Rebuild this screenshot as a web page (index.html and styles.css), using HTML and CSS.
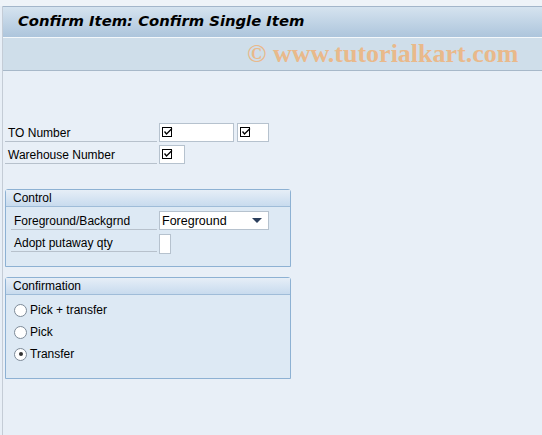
FILE: index.html
```html
<!DOCTYPE html>
<html>
<head>
    <title>Confirm Item: Confirm Single Item</title>
    <link rel="stylesheet" href="styles.css">
</head>
<body>

    <div class="topgap"></div>

    <div class="screen">
        <div class="titlebar">
            <h1>Confirm Item: Confirm Single Item</h1>
        </div>
        <div class="toolbar">
            <span class="watermark">&copy; www.tutorialkart.com</span>
        </div>

        <div class="content">
            <div class="form-row">
                <span class="label">TO Number</span>
                <span class="field w75"><svg class="chk" width="11" height="10" viewBox="0 0 11 10"><rect x="0.5" y="0.5" width="9" height="9" fill="none" stroke="#000"/><path d="M2.5 4.5 L4.5 7 L10 1.5" fill="none" stroke="#000" stroke-width="1.3"/></svg></span>
                <span class="field w32"><svg class="chk" width="11" height="10" viewBox="0 0 11 10"><rect x="0.5" y="0.5" width="9" height="9" fill="none" stroke="#000"/><path d="M2.5 4.5 L4.5 7 L10 1.5" fill="none" stroke="#000" stroke-width="1.3"/></svg></span>
            </div>
            <div class="form-row">
                <span class="label">Warehouse Number</span>
                <span class="field w26"><svg class="chk" width="11" height="10" viewBox="0 0 11 10"><rect x="0.5" y="0.5" width="9" height="9" fill="none" stroke="#000"/><path d="M2.5 4.5 L4.5 7 L10 1.5" fill="none" stroke="#000" stroke-width="1.3"/></svg></span>
            </div>

            <div class="group group-control">
                <div class="group-head">Control</div>
                <div class="group-body">
                    <div class="form-row">
                        <span class="label">Foreground/Backgrnd</span>
                        <span class="field select">Foreground<span class="arrow"></span></span>
                    </div>
                    <div class="form-row">
                        <span class="label">Adopt putaway qty</span>
                        <span class="field w12"></span>
                    </div>
                </div>
            </div>

            <div class="group group-confirm">
                <div class="group-head">Confirmation</div>
                <div class="group-body">
                    <div class="radio-row"><span class="radio"></span>Pick + transfer</div>
                    <div class="radio-row"><span class="radio"></span>Pick</div>
                    <div class="radio-row"><span class="radio on"></span>Transfer</div>
                </div>
            </div>
        </div>
    </div>

</body>
</html>
```

FILE: styles.css
```css
body {
    margin: 0;
    background: #e8eff7;
    font-family: "Liberation Sans", Arial, sans-serif;
    font-size: 12px;
    color: #000;
}
.topgap {
    height: 6px;
    background: #eef3f8;
}
.screen {
    margin-left: 2px;
    border-left: 1px solid #c4ccd6;
    height: 429px;
}
.titlebar {
    height: 30px;
    border-top: 1px solid #a3b6ca;
    border-bottom: 1px solid #f4f8fb;
    background: linear-gradient(#d5e3ef, #adc5dc);
}
h1 {
    margin: 0;
    padding: 5px 0 0 15px;
    font-family: "DejaVu Sans", Verdana, sans-serif;
    font-size: 14.8px;
    font-style: italic;
    font-weight: bold;
}
.toolbar {
    height: 32px;
    background: #cfdeea;
    border-bottom: 1px solid #a7b8c9;
    display: flex;
    align-items: center;
    padding-left: 244px;
}
.watermark {
    font-family: "Liberation Serif", serif;
    font-weight: bold;
    font-size: 26px;
    color: #e9b98b;
}
.content {
    padding: 52px 0 0 2px;
}
.form-row {
    display: flex;
    height: 19px;
    margin-bottom: 3px;
}
.label {
    width: 149px;
    padding-left: 3px;
    border-bottom: 1px solid #b7c1cc;
    line-height: 20px;
    margin-right: 2px;
}
.field {
    background: #fff;
    border: 1px solid #b6c2ce;
    box-sizing: border-box;
    height: 19px;
    margin-right: 3px;
    display: flex;
    align-items: center;
    padding-left: 2px;
}
.chk { margin-top: -1px; }
.w75 { width: 75px; }
.w32 { width: 32px; }
.w26 { width: 26px; }
.w12 { width: 12px; height: 20px; margin-top: 1px; }
.select {
    width: 110px;
    justify-content: space-between;
    padding: 0 6px 0 2px;
    font-size: 12.5px;
}
.arrow {
    width: 0;
    height: 0;
    border-left: 5px solid transparent;
    border-right: 5px solid transparent;
    border-top: 5px solid #2b3f5c;
}
.group {
    width: 286px;
    border: 1px solid #8db1d3;
    border-radius: 3px 3px 0 0;
    background: #dde9f4;
    box-sizing: border-box;
}
.group-control {
    margin-top: 25px;
    height: 78px;
}
.group-confirm {
    margin-top: 10px;
    height: 102px;
}
.group-head {
    height: 16px;
    line-height: 16px;
    padding-left: 7px;
    background: linear-gradient(#e6eef7, #c8dbee);
    border-bottom: 1px solid #9fbcd8;
}
.group-body {
    padding: 4px 0 0 5px;
}
.group-body .label {
    width: 143px;
}
.radio-row {
    display: flex;
    align-items: center;
    height: 22px;
}
.radio {
    width: 11px;
    height: 11px;
    border: 1px solid #7d8a98;
    border-radius: 50%;
    background: #fff;
    margin: 0 3px 0 3px;
    position: relative;
}
.radio.on::after {
    content: "";
    position: absolute;
    left: 3.5px;
    top: 3.5px;
    width: 4px;
    height: 4px;
    border-radius: 50%;
    background: #333;
}
```
